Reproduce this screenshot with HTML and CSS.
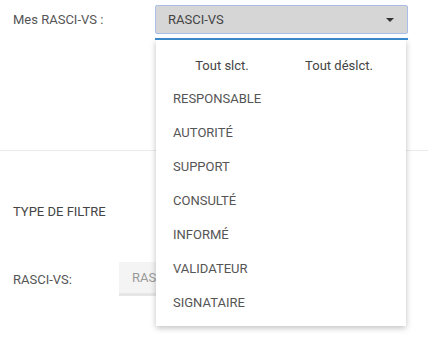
FILE: index.html
```html
<!DOCTYPE html>
<html lang="fr">
<head>
  <meta charset="UTF-8">
  <title>Mes RASCI-VS</title>
  <link rel="stylesheet" href="styles.css">
</head>
<body>

  <div class="haut">
    <div class="ligne-select">
      <label class="libelle">Mes RASCI-VS :</label>
      <div class="select-zone">
        <div class="select-box">
          <span>RASCI-VS</span>
          <span class="fleche"></span>
        </div>
        <div class="soulignement"></div>

        <div class="menu">
          <div class="menu-actions">
            <span class="tout">Tout slct.</span>
            <span class="aucun">Tout déslct.</span>
          </div>
          <div class="menu-item">RESPONSABLE</div>
          <div class="menu-item">AUTORITÉ</div>
          <div class="menu-item">SUPPORT</div>
          <div class="menu-item">CONSULTÉ</div>
          <div class="menu-item">INFORMÉ</div>
          <div class="menu-item">VALIDATEUR</div>
          <div class="menu-item">SIGNATAIRE</div>
        </div>
      </div>
    </div>
  </div>

  <div class="filtre">
    <div class="titre-filtre">TYPE DE FILTRE</div>
    <div class="ligne-filtre">
      <label class="libelle-court">RASCI-VS:</label>
      <div class="champ-gris">RAS</div>
    </div>
  </div>

</body>
</html>
```

FILE: styles.css
```css
* {
  margin: 0;
  padding: 0;
  box-sizing: border-box;
}

html, body {
  height: 100%;
}

body {
  font-family: Roboto, 'Liberation Sans', sans-serif;
  font-size: 13px;
  color: #555;
  background: #fff;
}

.haut {
  height: 151px;
  border-bottom: 1px solid #ececec;
}

.ligne-select {
  display: flex;
  padding-top: 5px;
}

.libelle {
  width: 155px;
  padding-left: 13px;
  line-height: 29px;
}

.select-zone {
  position: relative;
  width: 253px;
}

.select-box {
  height: 29px;
  background: #d6d6d6;
  border: 1px solid #a9bde6;
  border-radius: 2px;
  display: flex;
  align-items: center;
  justify-content: space-between;
  padding: 0 12px;
  color: #444;
}

.fleche {
  width: 0;
  height: 0;
  border-left: 4px solid transparent;
  border-right: 4px solid transparent;
  border-top: 4px solid #333;
  margin-right: 1px;
}

.soulignement {
  height: 2px;
  background: #3c8dd3;
  margin-top: 4px;
}

.menu {
  position: absolute;
  top: 35px;
  left: 1px;
  width: 250px;
  background: #fff;
  padding: 8px 0 6px;
  box-shadow: 0 2px 6px rgba(0, 0, 0, 0.25);
  z-index: 10;
}

.menu-actions {
  display: flex;
  height: 34px;
  align-items: center;
  padding-right: 16px;
  color: #444;
}

.tout {
  width: 132px;
  text-align: center;
}

.aucun {
  flex: 1;
  text-align: center;
}

.menu-item {
  height: 34px;
  line-height: 34px;
  padding-left: 17px;
  color: #555;
}

.filtre {
  padding-left: 13px;
}

.titre-filtre {
  margin-top: 52px;
  line-height: 18px;
  color: #444;
}

.ligne-filtre {
  display: flex;
  align-items: center;
  margin-top: 41px;
}

.libelle-court {
  width: 106px;
}

.champ-gris {
  background: #f4f4f4;
  border-bottom: 3px solid #e6e6e6;
  height: 34px;
  line-height: 31px;
  padding-left: 13px;
  width: 200px;
  color: #999;
}
```
